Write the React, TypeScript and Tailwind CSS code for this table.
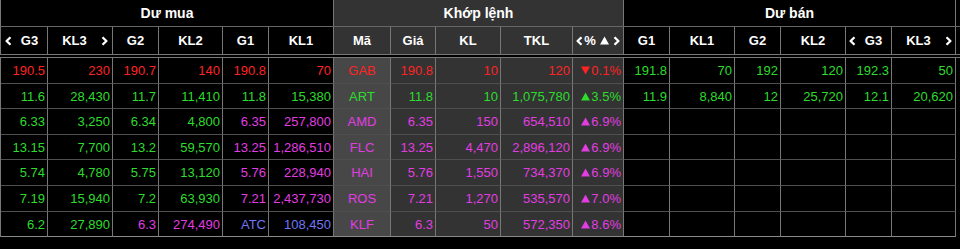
import React from 'react';

type Tone = 'r' | 'g' | 'm' | 'b';

const toneClass: Record<Tone, string> = {
  r: 'text-[#ff2323]',
  g: 'text-[#2ddc2d]',
  m: 'text-[#e23de2]',
  b: 'text-[#7276f8]',
};

type Row = {
  left: [string, Tone][];
  mid: { code: string; price: string; kl: string; tkl: string; pct: string; up: boolean; tone: Tone };
  right: string[];
};

const empty = ['', '', '', '', '', ''];

const rows: Row[] = [
  {
    left: [['190.5', 'r'], ['230', 'r'], ['190.7', 'r'], ['140', 'r'], ['190.8', 'r'], ['70', 'r']],
    mid: { code: 'GAB', price: '190.8', kl: '10', tkl: '120', pct: '0.1%', up: false, tone: 'r' },
    right: ['191.8', '70', '192', '120', '192.3', '50'],
  },
  {
    left: [['11.6', 'g'], ['28,430', 'g'], ['11.7', 'g'], ['11,410', 'g'], ['11.8', 'g'], ['15,380', 'g']],
    mid: { code: 'ART', price: '11.8', kl: '10', tkl: '1,075,780', pct: '3.5%', up: true, tone: 'g' },
    right: ['11.9', '8,840', '12', '25,720', '12.1', '20,620'],
  },
  {
    left: [['6.33', 'g'], ['3,250', 'g'], ['6.34', 'g'], ['4,800', 'g'], ['6.35', 'm'], ['257,800', 'm']],
    mid: { code: 'AMD', price: '6.35', kl: '150', tkl: '654,510', pct: '6.9%', up: true, tone: 'm' },
    right: empty,
  },
  {
    left: [['13.15', 'g'], ['7,700', 'g'], ['13.2', 'g'], ['59,570', 'g'], ['13.25', 'm'], ['1,286,510', 'm']],
    mid: { code: 'FLC', price: '13.25', kl: '4,470', tkl: '2,896,120', pct: '6.9%', up: true, tone: 'm' },
    right: empty,
  },
  {
    left: [['5.74', 'g'], ['4,780', 'g'], ['5.75', 'g'], ['13,120', 'g'], ['5.76', 'm'], ['228,940', 'm']],
    mid: { code: 'HAI', price: '5.76', kl: '1,550', tkl: '734,370', pct: '6.9%', up: true, tone: 'm' },
    right: empty,
  },
  {
    left: [['7.19', 'g'], ['15,940', 'g'], ['7.2', 'g'], ['63,930', 'g'], ['7.21', 'm'], ['2,437,730', 'm']],
    mid: { code: 'ROS', price: '7.21', kl: '1,270', tkl: '535,570', pct: '7.0%', up: true, tone: 'm' },
    right: empty,
  },
  {
    left: [['6.2', 'g'], ['27,890', 'g'], ['6.3', 'm'], ['274,490', 'm'], ['ATC', 'b'], ['108,450', 'b']],
    mid: { code: 'KLF', price: '6.3', kl: '50', tkl: '572,350', pct: '8.6%', up: true, tone: 'm' },
    right: empty,
  },
];

// row pitch alternates 26/25 px like the original board
const rowHeights = ['h-[26px]', 'h-[25px]', 'h-[26px]', 'h-[25px]', 'h-[26px]', 'h-[26px]', 'h-[25px]'];

const cols =
  'grid grid-cols-[47px_65px_46px_64px_46px_65px_57px_45px_65px_72px_51px_46px_65px_46px_65px_46px_64px]';

function Chevron({ dir }: { dir: 'left' | 'right' }) {
  return (
    <svg width="7" height="10" viewBox="0 0 7 10" className="shrink-0">
      <polyline
        points={dir === 'left' ? '5.5,1.2 1.6,5 5.5,8.8' : '1.5,1.2 5.4,5 1.5,8.8'}
        fill="none"
        stroke="white"
        strokeWidth="2.3"
        strokeLinejoin="round"
      />
    </svg>
  );
}

function Triangle({ up }: { up: boolean }) {
  return (
    <svg width="9" height="9" viewBox="0 0 9 9" className="mr-[1px] shrink-0">
      <polygon points={up ? '4.5,0.5 9,8.5 0,8.5' : '0,0.5 9,0.5 4.5,8.5'} fill="currentColor" />
    </svg>
  );
}

function HeadCell({ children, mid }: { children: React.ReactNode; mid?: boolean }) {
  return (
    <div
      className={`flex items-center justify-center border-r border-r-[#777] ${
        mid ? 'bg-[#333333]' : ''
      }`}
    >
      {children}
    </div>
  );
}

function DataCell({
  children,
  tone,
  bg,
  center,
  last,
}: {
  children: React.ReactNode;
  tone: Tone;
  bg?: string;
  center?: boolean;
  last?: boolean;
}) {
  return (
    <div
      className={`flex items-center border-r border-b border-r-[#777] ${
        last ? 'border-b-[#8a8a8a]' : 'border-b-[#4f4f4f]'
      } ${center ? 'justify-center' : 'justify-end pr-[2px]'} ${bg ?? ''} ${toneClass[tone]} whitespace-nowrap`}
    >
      {children}
    </div>
  );
}

export default function App() {
  return (
    <div className="h-[249px] w-[960px] overflow-hidden bg-black font-['Liberation_Sans',Arial,sans-serif] text-[13px] leading-none">
      {/* header */}
      <div className="border-b border-b-[#777] font-bold text-white">
        <div className="grid h-[27px] grid-cols-[333px_290px_332px] border-b border-l border-b-[#666] border-l-[#777] text-[14px]">
          <HeadCell>Dư mua</HeadCell>
          <HeadCell mid>Khớp lệnh</HeadCell>
          <HeadCell>Dư bán</HeadCell>
        </div>
        <div className={`${cols} h-[27px] border-l border-l-[#777]`}>
          <div className="flex items-center border-r border-r-[#777] pl-[4px]">
            <Chevron dir="left" />
            <span className="flex-1 text-center">G3</span>
          </div>
          <div className="flex items-center border-r border-r-[#777] pr-[4px]">
            <span className="flex-1 text-center">KL3</span>
            <Chevron dir="right" />
          </div>
          <HeadCell>G2</HeadCell>
          <HeadCell>KL2</HeadCell>
          <HeadCell>G1</HeadCell>
          <HeadCell>KL1</HeadCell>
          <HeadCell mid>Mã</HeadCell>
          <HeadCell mid>Giá</HeadCell>
          <HeadCell mid>KL</HeadCell>
          <HeadCell mid>TKL</HeadCell>
          <HeadCell mid>
            <span className="flex items-center">
              <Chevron dir="left" />
              <span className="ml-[1px]">%</span>
              <span className="ml-[4px] text-white">
                <Triangle up />
              </span>
              <span className="ml-[3px]">
                <Chevron dir="right" />
              </span>
            </span>
          </HeadCell>
          <HeadCell>G1</HeadCell>
          <HeadCell>KL1</HeadCell>
          <HeadCell>G2</HeadCell>
          <HeadCell>KL2</HeadCell>
          <div className="flex items-center border-r border-r-[#777] pl-[3px]">
            <Chevron dir="left" />
            <span className="flex-1 text-center">G3</span>
          </div>
          <div className="flex items-center border-r border-r-[#777] pr-[3px]">
            <span className="flex-1 text-center">KL3</span>
            <Chevron dir="right" />
          </div>
        </div>
      </div>

      {/* body */}
      <div className="mt-[2px] border-t border-t-[#777]">
        {rows.map((row, i) => {
          const last = i === rows.length - 1;
          const m = row.mid;
          return (
            <div key={m.code} className={`${cols} ${rowHeights[i]} border-l border-l-[#777]`}>
              {row.left.map(([v, t], j) => (
                <DataCell key={j} tone={t} last={last}>
                  {v}
                </DataCell>
              ))}
              <DataCell tone={m.tone} bg="bg-[#474747]" center last={last}>
                {m.code}
              </DataCell>
              <DataCell tone={m.tone} bg="bg-[#333333]" last={last}>
                {m.price}
              </DataCell>
              <DataCell tone={m.tone} bg="bg-[#333333]" last={last}>
                {m.kl}
              </DataCell>
              <DataCell tone={m.tone} bg="bg-[#333333]" last={last}>
                {m.tkl}
              </DataCell>
              <DataCell tone={m.tone} bg="bg-[#333333]" last={last}>
                <Triangle up={m.up} />
                {m.pct}
              </DataCell>
              {row.right.map((v, j) => (
                <DataCell key={j} tone="g" last={last}>
                  {v}
                </DataCell>
              ))}
            </div>
          );
        })}
      </div>
    </div>
  );
}
